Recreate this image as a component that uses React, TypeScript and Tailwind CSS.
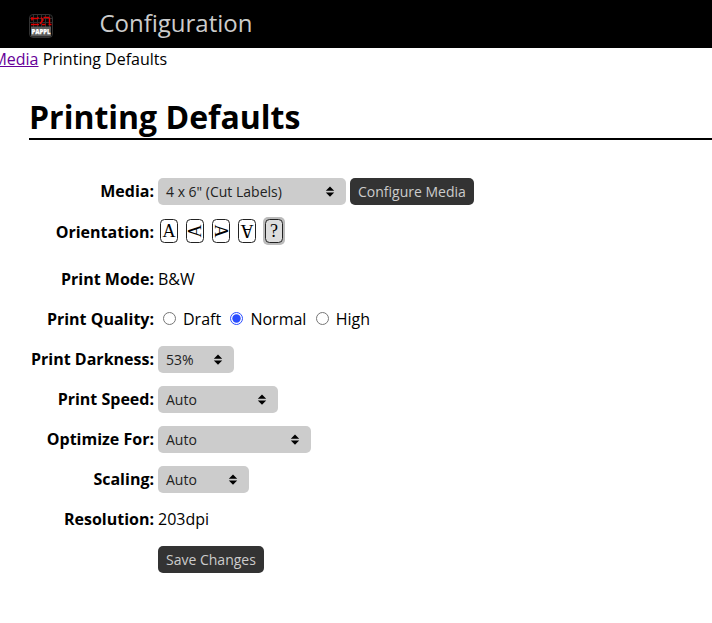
import type { ReactNode } from "react";

function Row({ label, height, children }: { label: ReactNode; height: string; children: ReactNode }) {
  return (
    <div className={`flex items-center ${height}`}>
      <div className="w-[154px] shrink-0 text-right font-bold whitespace-nowrap">{label}</div>
      <div className="ml-1 flex items-center whitespace-nowrap">{children}</div>
    </div>
  );
}

function Select({ value, width }: { value: string; width: string }) {
  return (
    <button className={`flex h-[27px] items-center justify-between rounded-[5px] bg-[#cccccc] pr-[11px] pl-2 text-[14px] text-[#222222] ${width}`}>
      <span className="pt-px">{value}</span>
      <svg width="10" height="11" viewBox="0 0 10 11" fill="#000">
        <path d="M5 .5 9.2 4.8H.8ZM.8 6.5H9.2L5 10.8Z" />
      </svg>
    </button>
  );
}

function Button({ children }: { children: ReactNode }) {
  return <button className="h-[27px] rounded-[5px] bg-[#333333] px-2 pt-px text-[14px] text-[#cccccc]">{children}</button>;
}

function Orientation({ glyph, angle, selected }: { glyph: string; angle: number; selected?: boolean }) {
  return (
    <svg width="22" height="28" viewBox="0 0 22 28" className={selected ? "ml-px rounded-[5px] bg-[#bbbbbb]" : ""}>
      <rect x="2.5" y="2.5" width="17" height="23" rx="4" fill={selected ? "#dddddd" : "#fff"} stroke="#222" />
      <text x="11" y="20" fontSize="18" textAnchor="middle" fontFamily="Liberation Serif, serif" transform={`rotate(${angle} 11 14)`}>
        {glyph}
      </text>
    </svg>
  );
}

function Radio({ label, checked }: { label: string; checked?: boolean }) {
  return (
    <label className="flex items-center">
      <svg width="13" height="13" viewBox="0 0 13 13" className="-mt-px mr-[7px] ml-[5px]">
        <circle cx="6.5" cy="6.5" r="6" fill="#fff" stroke={checked ? "#2a4dff" : "#767676"} />
        {checked && <circle cx="6.5" cy="6.5" r="4.2" fill="#2a4dff" />}
      </svg>
      <span>{label}</span>
    </label>
  );
}

function Logo() {
  return (
    <svg width="24" height="24" viewBox="0 0 24 24" className="mt-1">
      <rect x=".5" y=".5" width="23" height="23" rx="3.5" fill="#050505" stroke="#333" />
      <path d="M4.5 1v22M8.5 1v22M12.5 1v22M16.5 1v22M20.5 1v22M1 4.5h22M1 8.5h22M1 22.5h22" stroke="#303030" fill="none" />
      <path d="M2 4.5h7M3 3v3.5M9 3v2M12 3.5l2.5 3M14.5 3.5H20M20.5 3.5v6M13.5 6.5l-2.5 3.5M2 10.5h8M13 10.5h3.5M19.5 10.5h3" stroke="#e00000" strokeWidth="1.4" fill="none" />
      <rect x="2" y="12.5" width="20" height="9.5" fill="#5c5c5c" />
      <text x="12" y="19.5" fontSize="7" fontWeight="800" textAnchor="middle" textLength="19" lengthAdjust="spacingAndGlyphs" fill="#fff" stroke="#fff" strokeWidth=".25" fontFamily="Open Sans, sans-serif">
        PAPPL
      </text>
    </svg>
  );
}

export default function App() {
  return (
    <div className="h-[623px] w-[712px] overflow-hidden bg-white font-['Open_Sans',sans-serif] text-[16px] leading-[22px] text-black">
      <header className="flex h-12 items-center bg-black pl-[29px] text-[24px] text-[#cccccc]">
        <Logo />
        <span className="-mt-[3px] ml-[46.4px]">Configuration</span>
      </header>
      <nav className="-ml-[7.6px] h-[22px] whitespace-nowrap">
        <a href="#" className="text-[#660099] underline">Media</a> Printing Defaults
      </nav>
      <h1 className="mt-[25px] ml-[29px] h-[45px] border-b-2 border-black text-[32px] leading-[44px] font-bold">Printing Defaults</h1>
      <form className="pt-[31px]">
        <Row label="Media:" height="h-10">
          <Select value={'4 x 6" (Cut Labels)'} width="w-[188px]" />
          <div className="ml-1 flex"><Button>Configure Media</Button></div>
        </Row>
        <Row label={<div className="pt-0.5">Orientation:</div>} height="h-10">
          <div className="flex gap-1">
            <Orientation glyph="A" angle={0} />
            <Orientation glyph="A" angle={-90} />
            <Orientation glyph="A" angle={90} />
            <Orientation glyph="A" angle={180} />
            <Orientation glyph="?" angle={0} selected />
          </div>
        </Row>
        <Row label="Print Mode:" height="mt-2 h-10">B&amp;W</Row>
        <Row label="Print Quality:" height="h-10">
          <div className="flex gap-[4.3px]">
            <Radio label="Draft" />
            <Radio label="Normal" checked />
            <Radio label="High" />
          </div>
        </Row>
        <Row label="Print Darkness:" height="h-10"><Select value="53%" width="w-[76px]" /></Row>
        <Row label="Print Speed:" height="h-10"><Select value="Auto" width="w-[120px]" /></Row>
        <Row label="Optimize For:" height="h-10"><Select value="Auto" width="w-[153px]" /></Row>
        <Row label="Scaling:" height="h-10"><Select value="Auto" width="w-[91px]" /></Row>
        <Row label="Resolution:" height="h-10">203dpi</Row>
        <Row label="" height="h-10"><Button>Save Changes</Button></Row>
      </form>
    </div>
  );
}
